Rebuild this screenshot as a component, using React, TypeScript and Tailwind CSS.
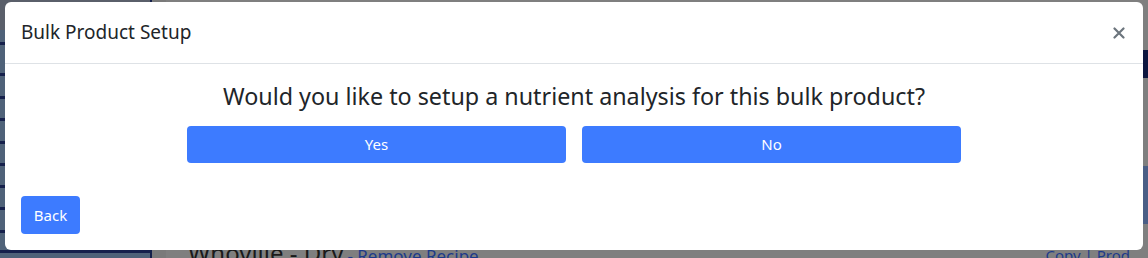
import React from 'react';

const sidebarLines = [42, 73, 96, 118, 141, 163, 185, 207, 230];

export default function App() {
    return (
        <div className="relative w-[1148px] h-[258px] overflow-hidden bg-[#7f7f7f] font-['Noto_Sans',sans-serif]">
            {/* dimmed page behind the modal */}
            <div className="absolute inset-0 flex">
                <div className="relative w-[152px] h-full bg-[#4f6279] border-r-2 border-[#14204a]">
                    <div className="h-[30px] bg-[#5a5f6a]" />
                    {sidebarLines.map(y => (
                        <div key={y} className="absolute left-0 right-0 h-[3px] bg-[#16204c]" style={{ top: y }} />
                    ))}
                    <div className="absolute left-0 right-0 bottom-[5px] h-[3px] bg-[#16204c]" />
                </div>
                <div className="w-[14px] h-full bg-[#7a7a7a]" />
                <div className="flex-1 relative">
                    <div className="absolute left-[22px] top-[235px] flex items-baseline gap-[4px] whitespace-nowrap">
                        <span className="text-[24px] text-[#1a1a1a]">Whoville - Dry</span>
                        <span className="text-[17px] text-[#1d3a8a]">- Remove Recipe</span>
                    </div>
                    <div className="absolute right-[18px] top-[244px] text-[15px] text-[#1d3a8a] whitespace-nowrap">Copy | Prod</div>
                </div>
                <div className="absolute right-0 top-[50px] w-[8px] h-[28px] bg-[#0d1640]" />
                <div className="absolute right-0 top-[166px] w-[8px] h-[58px] bg-[#4a5e86]" />
            </div>

            {/* modal */}
            <div className="absolute left-[5px] top-[2px] w-[1138px] h-[248px] bg-white rounded-[6px] flex flex-col">
                <div className="h-[62px] px-4 flex items-center justify-between border-b border-[#dee2e6]">
                    <h5 className="text-[19px] text-[#212529]">Bulk Product Setup</h5>
                    <button className="mr-[2px] text-[#6c757d]">
                        <svg width="12" height="12" viewBox="0 0 12 12" fill="none" stroke="currentColor" strokeWidth="2.2" strokeLinecap="round">
                            <path d="M1.5 1.5 L10.5 10.5 M10.5 1.5 L1.5 10.5" />
                        </svg>
                    </button>
                </div>
                <div className="flex-1 flex flex-col items-center pt-[16px]">
                    <h4 className="text-[23.3px] leading-[32px] text-[#212529]">Would you like to setup a nutrient analysis for this bulk product?</h4>
                    <div className="mt-[14px] flex gap-4">
                        <button className="w-[379px] h-[37px] rounded-[4px] bg-[#3d7bff] text-white text-[15px]">Yes</button>
                        <button className="w-[379px] h-[37px] rounded-[4px] bg-[#3d7bff] text-white text-[15px]">No</button>
                    </div>
                </div>
                <div className="px-4 pb-[16px]">
                    <button className="w-[59px] h-[38px] rounded-[4px] bg-[#3d7bff] text-white text-[15px]">Back</button>
                </div>
            </div>
        </div>
    );
}
